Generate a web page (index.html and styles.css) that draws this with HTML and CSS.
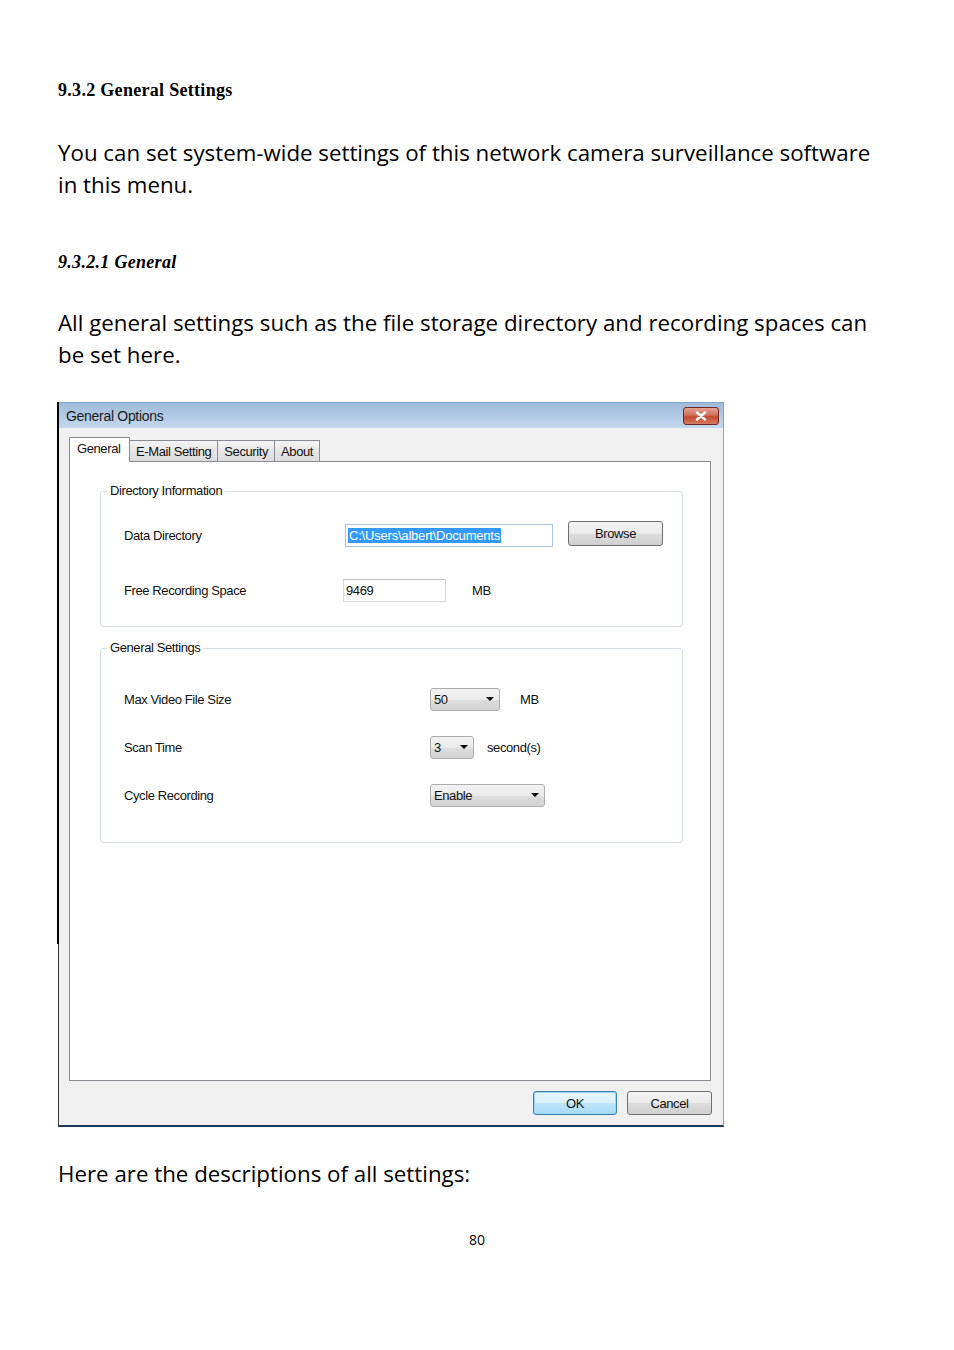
FILE: index.html
```html
<!DOCTYPE html>
<html>
<head>
<meta charset="utf-8">
<link rel="stylesheet" href="styles.css">
</head>
<body>
<div class="page">
  <h2 class="h-sec">9.3.2 General Settings</h2>
  <p class="para p1">You can set system-wide settings of this network camera surveillance software in this menu.</p>
  <h3 class="h-sub">9.3.2.1 General</h3>
  <p class="para p2">All general settings such as the file storage directory and recording spaces can be set here.</p>

  <div class="window">
    <div class="edge"></div>
    <div class="titlebar">
      <span class="title">General Options</span>
      <span class="close">
        <svg width="14" height="10" viewBox="0 0 14 10"><path d="M3 1.5 L11 8.5 M11 1.5 L3 8.5" stroke="#ffffff" stroke-width="2.4" stroke-linecap="round"/></svg>
      </span>
    </div>
    <div class="winbody">
      <div class="tabs">
        <span class="tab active">General</span>
        <span class="tab">E-Mail Setting</span>
        <span class="tab">Security</span>
        <span class="tab">About</span>
      </div>
      <div class="panel">
        <div class="group g1">
          <span class="legend">Directory Information</span>
          <div class="row r-dir">
            <span class="label">Data Directory</span>
            <span class="input wide"><span class="sel">C:\Users\albert\Documents</span></span>
            <span class="btn browse">Browse</span>
          </div>
          <div class="row r-free">
            <span class="label">Free Recording Space</span>
            <span class="input small">9469</span>
            <span class="unit">MB</span>
          </div>
        </div>
        <div class="group g2">
          <span class="legend">General Settings</span>
          <div class="row r2">
            <span class="label l2">Max Video File Size</span>
            <span class="combo c50"><span>50</span><i class="arrow"></i></span>
            <span class="unit u-mb">MB</span>
          </div>
          <div class="row r2">
            <span class="label l2">Scan Time</span>
            <span class="combo c3"><span>3</span><i class="arrow"></i></span>
            <span class="unit u-sec">second(s)</span>
          </div>
          <div class="row r2">
            <span class="label l2">Cycle Recording</span>
            <span class="combo cen"><span>Enable</span><i class="arrow"></i></span>
          </div>
        </div>
      </div>
      <div class="buttons">
        <span class="btn ok">OK</span>
        <span class="btn cancel">Cancel</span>
      </div>
    </div>
  </div>

  <p class="para p3">Here are the descriptions of all settings:</p>
  <div class="pagenum">80</div>
</div>
</body>
</html>
```
FILE: styles.css
```css
html, body { margin: 0; padding: 0; background: #ffffff; }
.page { padding: 80px 0 0 58px; width: 840px; }

.h-sec {
  font-family: "Liberation Serif", "DejaVu Serif", serif;
  font-weight: bold; font-size: 18px; line-height: 20px;
  letter-spacing: 0.3px;
  margin: 0; color: #000;
}
.h-sub {
  font-family: "Liberation Serif", "DejaVu Serif", serif;
  font-weight: bold; font-style: italic; font-size: 18px; line-height: 20px;
  letter-spacing: 0.3px;
  margin: 51px 0 0 0; color: #000;
}
.para {
  font-family: "Open Sans", "Lato", sans-serif;
  font-size: 22.3px; line-height: 32px; margin: 0; color: #000;
  letter-spacing: 0;
}
.p1 { margin-top: 37px; width: 830px; }
.p2 { margin-top: 35px; width: 830px; }
.p3 { margin-top: 31px; }
.pagenum {
  font-family: "Open Sans", sans-serif; font-size: 14px; line-height: 20px;
  width: 838px; text-align: center; margin-top: 40px;
}

/* dialog */
.window {
  position: relative;
  margin-top: 31px;
  width: 664px; height: 722px;
  border: 1px solid #7fa7cc;
  border-bottom: 2px solid #1f3b57;
  border-left: 1px solid #3a3a3a;
  background: #f0f0f0;
  font-family: "Liberation Sans", Arial, sans-serif;
  font-size: 13px; letter-spacing: -0.4px; color: #111;
  display: flex; flex-direction: column;
}
.edge {
  position: absolute; left: -2px; top: -1px; width: 2px; height: 542px; background: #000;
}
.titlebar {
  height: 25px;
  background: linear-gradient(#9fbad8, #b5cde7 60%, #c3d8ee);
  display: flex; align-items: center; justify-content: space-between;
  padding: 0 4px 0 7px;
}
.title { font-size: 14px; letter-spacing: -0.3px; color: #1a1a1a; padding-top: 1px; }
.close {
  width: 36px; height: 18px; box-sizing: border-box;
  border: 1px solid #6e2a20; border-radius: 3px;
  background: linear-gradient(#e5a394, #d1705b 45%, #c24a30 55%, #d67b62);
  display: flex; align-items: center; justify-content: center;
}
.winbody { flex: 1; display: flex; flex-direction: column; padding: 9px 12px 0 10px; }

.tabs { display: flex; align-items: flex-end; height: 24px; position: relative; z-index: 1; }
.tab {
  height: 21px; box-sizing: border-box; padding: 0 6px 0 6px;
  border: 1px solid #898c95; border-bottom: none; border-left: none;
  background: linear-gradient(#f4f4f4, #e6e6e6 50%, #dcdcdc);
  display: flex; align-items: center;
}
.tab.active {
  height: 25px; margin-bottom: -1px; background: #ffffff;
  border-left: 1px solid #898c95; padding: 0 6px 3px 7px; width: 61px;
}
.panel {
  height: 620px; box-sizing: border-box;
  border: 1px solid #898c95; background: #ffffff;
  padding: 29px 27px 0 30px;
}

.group {
  position: relative; border: 1px solid #d5dfe5; border-radius: 3px;
}
.legend {
  position: absolute; top: -9px; left: 6px; padding: 0 3px;
  background: #ffffff; line-height: 16px;
}
.g1 { height: 136px; box-sizing: border-box; padding: 30px 0 0 23px; }
.g2 { margin-top: 21px; height: 195px; box-sizing: border-box; padding: 38px 0 0 23px; }

.row { display: flex; align-items: center; }
.label { width: 221px; flex: none; }
.l2 { width: 306px; }
.r-dir { height: 26px; }
.r-free { height: 24px; margin-top: 30px; }
.r2 { height: 24px; margin-bottom: 24px; }

.input {
  height: 23px; box-sizing: border-box; border: 1px solid #c9d4de;
  border-top-color: #abadb3; background: #fff;
  display: flex; align-items: center; padding-left: 2px;
}
.input.wide { width: 208px; border-color: #a9c3dc; }
.input.small { width: 103px; margin-left: -2px; border-color: #d9d9d9; border-top-color: #bfbfbf; }
.sel { background: #3399ff; color: #fff; padding: 0 1px; line-height: 15px; letter-spacing: -0.2px; }
.btn {
  box-sizing: border-box; border: 1px solid #707070; border-radius: 3px;
  background: linear-gradient(#f3f3f3, #ebebeb 50%, #dddddd 51%, #cfcfcf);
  display: flex; align-items: center; justify-content: center;
}
.browse { width: 95px; height: 25px; margin-left: 15px; margin-top: -3px; }
.unit { margin-left: 26px; }
.u-mb { margin-left: 20px; }
.u-sec { margin-left: 13px; }

.combo {
  height: 23px; box-sizing: border-box; border: 1px solid #acacac; border-radius: 3px;
  background: linear-gradient(#f2f2f2, #ebebeb 50%, #dddddd 51%, #d3d3d3);
  display: flex; align-items: center; justify-content: space-between;
  padding: 0 5px 0 3px;
}
.c50 { width: 70px; }
.c3 { width: 44px; }
.cen { width: 115px; }
.arrow {
  width: 0; height: 0; border-left: 4px solid transparent; border-right: 4px solid transparent;
  border-top: 4px solid #000;
}

.buttons { display: flex; justify-content: flex-end; gap: 10px; margin-top: 10px; }
.ok, .cancel { height: 24px; }
.ok {
  width: 84px; border-color: #3c7fb1;
  background: linear-gradient(#e8f5fc, #d9f0fc 50%, #bee6fd 51%, #a7d9f5);
  box-shadow: inset 0 0 0 1px #9ad7f4;
}
.cancel { width: 85px; margin-right: -1px; }
```
